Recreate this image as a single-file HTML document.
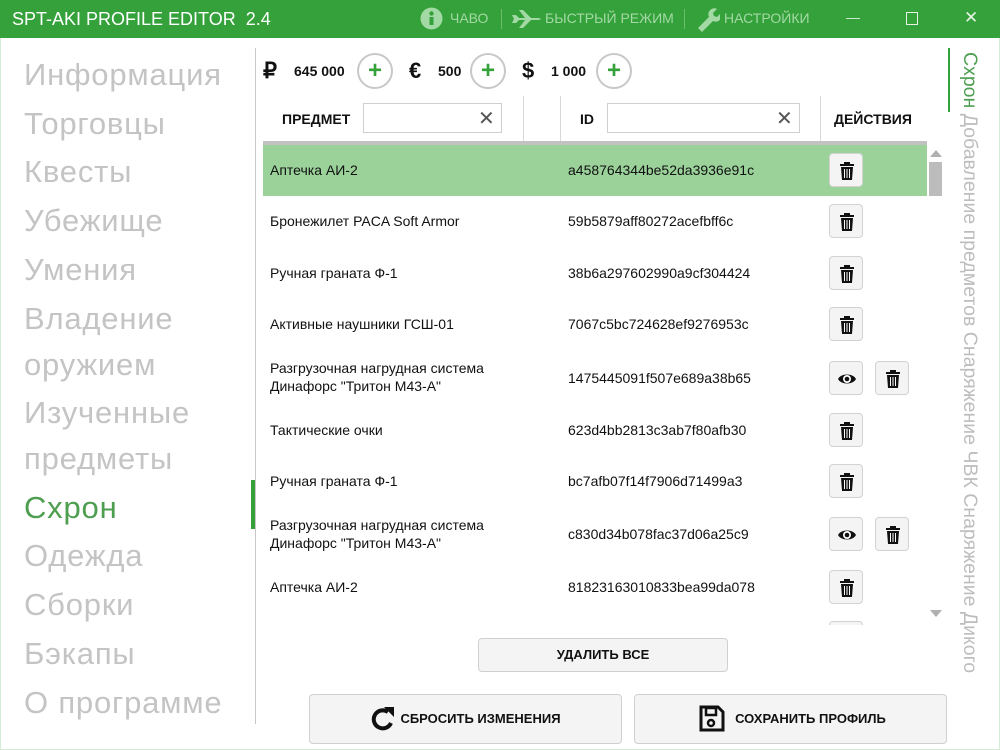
<!DOCTYPE html>
<html><head><meta charset="utf-8"><style>
*{margin:0;padding:0;box-sizing:border-box}
body{width:1000px;height:750px;position:relative;overflow:hidden;background:#fff;font-family:"Liberation Sans","Noto Sans CJK SC",sans-serif;color:#111}
.a{position:absolute}
#tb{left:0;top:0;width:1000px;height:38px;background:#34a13a;color:#fff}
.tbt{font-size:14px;color:#a3d9a4;top:10px}
.nav{left:24px;font-size:31px;letter-spacing:0.8px;color:#c4c4c4;line-height:45px;white-space:nowrap}
.circ{width:36px;height:36px;border:2px solid #c8c8c8;border-radius:50%;color:#35a13a;font-size:24px;font-weight:bold;text-align:center;line-height:31px}
.cur{font-size:14px;font-weight:bold;top:63px}
.nm{left:270px;font-size:14px;line-height:18px}
.id{left:568px;font-size:14px}
.btn{width:34px;height:34px;background:#f4f4f4;border:1px solid #d2d2d2;border-radius:4px}
.btn svg{position:absolute;left:8px;top:8px}
.bb{background:#f4f4f4;border:1px solid #d0d0d0;border-radius:4px;font-size:13px;font-weight:bold;text-align:center}
.hd{font-size:14px;font-weight:bold;top:111px}
.inp{height:30px;border:1px solid #cfcfcf;top:103px;background:#fff}
.vl{width:1px;background:#d8d8d8;top:96px;height:46px}
</style></head><body>
<div class="a" style="left:0;top:38px;width:1000px;height:712px;border:1px solid #d7ecd7;border-top:none"></div>
<div id="tb" class="a">
 <div class="a" style="left:12px;top:9px;font-size:18px;color:#fff">SPT-AKI PROFILE EDITOR&nbsp; 2.4</div>
 <svg class="a" style="left:420px;top:7px" width="23" height="23"><circle cx="11.5" cy="11.5" r="11" fill="#a3d9a4"/><rect x="9.5" y="10" width="4" height="8" fill="#34a13a"/><circle cx="11.5" cy="6.5" r="2.2" fill="#34a13a"/></svg>
 <div class="a tbt" style="left:450px">ЧАВО</div>
 <div class="a" style="left:501px;top:9px;width:1px;height:20px;background:#6cbd6e"></div>
 <svg class="a" style="left:511px;top:9px" width="30" height="20"><path d="M1 6h4l3 3h6L8 1h4l8 8h7c2 0 3 1 3 1s-1 1-3 1h-7l-8 8H8l6-8H8l-3 3H1l2-4z" fill="#a3d9a4"/></svg>
 <div class="a tbt" style="left:545px">БЫСТРЫЙ РЕЖИМ</div>
 <div class="a" style="left:684px;top:9px;width:1px;height:20px;background:#6cbd6e"></div>
 <svg class="a" style="left:694px;top:6px" width="26" height="26"><path d="M4 22l11-11a6 6 0 0 1 8-8l-4 4 1 3 3 1 4-4a6 6 0 0 1-8 8L8 26z" fill="#a3d9a4"/></svg>
 <div class="a tbt" style="left:724px">НАСТРОЙКИ</div>
 <div class="a" style="left:846px;top:18px;width:14px;height:1px;background:#cfe9cf"></div>
 <div class="a" style="left:906px;top:12px;width:12px;height:13px;border:1px solid #e6f4e6"></div>
 <div class="a" style="left:964px;top:8px;font-size:17px;color:#e6f4e6">✕</div>
</div>
<div class="a nav" style="top:52px">Информация</div>
<div class="a nav" style="top:101px">Торговцы</div>
<div class="a nav" style="top:149px">Квесты</div>
<div class="a nav" style="top:198px">Убежище</div>
<div class="a nav" style="top:247px">Умения</div>
<div class="a nav" style="top:296px">Владение</div>
<div class="a nav" style="top:342px">оружием</div>
<div class="a nav" style="top:390px">Изученные</div>
<div class="a nav" style="top:436px">предметы</div>
<div class="a nav" style="top:485px;color:#4e9e50">Схрон</div>
<div class="a nav" style="top:533px">Одежда</div>
<div class="a nav" style="top:582px">Сборки</div>
<div class="a nav" style="top:631px">Бэкапы</div>
<div class="a nav" style="top:680px">О программе</div>
<div class="a" style="left:255px;top:48px;width:1px;height:676px;background:#c8c8c8"></div>
<div class="a" style="left:251px;top:480px;width:4px;height:49px;background:#35a13a"></div>
<div class="a" style="left:263px;top:58px;font-size:22px;font-weight:bold">₽</div>
<div class="a cur" style="left:294px">645 000</div>
<div class="a circ" style="left:357px;top:53px">+</div>
<div class="a" style="left:409px;top:58px;font-size:22px;font-weight:bold">€</div>
<div class="a cur" style="left:438px">500</div>
<div class="a circ" style="left:470px;top:53px">+</div>
<div class="a" style="left:522px;top:58px;font-size:22px;font-weight:bold">$</div>
<div class="a cur" style="left:551px">1 000</div>
<div class="a circ" style="left:596px;top:53px">+</div>
<div class="a hd" style="left:282px">ПРЕДМЕТ</div>
<div class="a inp" style="left:363px;width:139px"></div>
<div class="a" style="left:478px;top:106px;font-size:20px;color:#555">✕</div>
<div class="a vl" style="left:523px"></div>
<div class="a vl" style="left:560px"></div>
<div class="a hd" style="left:580px">ID</div>
<div class="a inp" style="left:607px;width:193px"></div>
<div class="a" style="left:776px;top:106px;font-size:20px;color:#555">✕</div>
<div class="a vl" style="left:820px"></div>
<div class="a hd" style="left:834px">ДЕЙСТВИЯ</div>
<div class="a" style="left:263px;top:141px;width:664px;height:4px;background:#c2c2c2"></div>
<div class="a" style="left:263px;top:145px;width:664px;height:51px;background:#9ad29a"></div>
<div class="a" style="left:930px;top:150px;width:0;height:0;border-left:6px solid transparent;border-right:6px solid transparent;border-bottom:7px solid #b0b0b0"></div>
<div class="a" style="left:929px;top:162px;width:13px;height:34px;background:#bcbcbc"></div>
<div class="a" style="left:930px;top:610px;width:0;height:0;border-left:6px solid transparent;border-right:6px solid transparent;border-top:7px solid #b0b0b0"></div>
<div class="a nm" style="top:161px">Аптечка АИ-2</div><div class="a id" style="top:162px">a458764344be52da3936e91c</div>
<div class="a nm" style="top:212px">Бронежилет PACA Soft Armor</div><div class="a id" style="top:213px">59b5879aff80272acefbff6c</div>
<div class="a nm" style="top:264px">Ручная граната Ф-1</div><div class="a id" style="top:265px">38b6a297602990a9cf304424</div>
<div class="a nm" style="top:315px">Активные наушники ГСШ-01</div><div class="a id" style="top:316px">7067c5bc724628ef9276953c</div>
<div class="a nm" style="top:359px">Разгрузочная нагрудная система<br>Динафорс "Тритон М43-А"</div><div class="a id" style="top:370px">1475445091f507e689a38b65</div>
<div class="a nm" style="top:421px">Тактические очки</div><div class="a id" style="top:422px">623d4bb2813c3ab7f80afb30</div>
<div class="a nm" style="top:472px">Ручная граната Ф-1</div><div class="a id" style="top:473px">bc7afb07f14f7906d71499a3</div>
<div class="a nm" style="top:516px">Разгрузочная нагрудная система<br>Динафорс "Тритон М43-А"</div><div class="a id" style="top:526px">c830d34b078fac37d06a25c9</div>
<div class="a nm" style="top:578px">Аптечка АИ-2</div><div class="a id" style="top:579px">81823163010833bea99da078</div>
<div class="a btn" style="left:829px;top:153px"><svg width="18" height="18"><rect x="2" y="2" width="14" height="2" fill="#111"/><rect x="6" y="0" width="6" height="2" fill="#111"/><path d="M3 5h12l-1 13H4z" fill="#111"/><path d="M6.5 7v9M9 7v9M11.5 7v9" stroke="#fff" stroke-width="1"/></svg></div>
<div class="a btn" style="left:829px;top:204px"><svg width="18" height="18"><rect x="2" y="2" width="14" height="2" fill="#111"/><rect x="6" y="0" width="6" height="2" fill="#111"/><path d="M3 5h12l-1 13H4z" fill="#111"/><path d="M6.5 7v9M9 7v9M11.5 7v9" stroke="#fff" stroke-width="1"/></svg></div>
<div class="a btn" style="left:829px;top:256px"><svg width="18" height="18"><rect x="2" y="2" width="14" height="2" fill="#111"/><rect x="6" y="0" width="6" height="2" fill="#111"/><path d="M3 5h12l-1 13H4z" fill="#111"/><path d="M6.5 7v9M9 7v9M11.5 7v9" stroke="#fff" stroke-width="1"/></svg></div>
<div class="a btn" style="left:829px;top:307px"><svg width="18" height="18"><rect x="2" y="2" width="14" height="2" fill="#111"/><rect x="6" y="0" width="6" height="2" fill="#111"/><path d="M3 5h12l-1 13H4z" fill="#111"/><path d="M6.5 7v9M9 7v9M11.5 7v9" stroke="#fff" stroke-width="1"/></svg></div>
<div class="a btn" style="left:829px;top:361px"><svg width="18" height="18"><path d="M0 9C3 3 15 3 18 9C15 15 3 15 0 9z" fill="#111"/><circle cx="9" cy="9" r="4" fill="#fff"/><circle cx="9" cy="9" r="2.3" fill="#111"/></svg></div>
<div class="a btn" style="left:875px;top:361px"><svg width="18" height="18"><rect x="2" y="2" width="14" height="2" fill="#111"/><rect x="6" y="0" width="6" height="2" fill="#111"/><path d="M3 5h12l-1 13H4z" fill="#111"/><path d="M6.5 7v9M9 7v9M11.5 7v9" stroke="#fff" stroke-width="1"/></svg></div>
<div class="a btn" style="left:829px;top:413px"><svg width="18" height="18"><rect x="2" y="2" width="14" height="2" fill="#111"/><rect x="6" y="0" width="6" height="2" fill="#111"/><path d="M3 5h12l-1 13H4z" fill="#111"/><path d="M6.5 7v9M9 7v9M11.5 7v9" stroke="#fff" stroke-width="1"/></svg></div>
<div class="a btn" style="left:829px;top:464px"><svg width="18" height="18"><rect x="2" y="2" width="14" height="2" fill="#111"/><rect x="6" y="0" width="6" height="2" fill="#111"/><path d="M3 5h12l-1 13H4z" fill="#111"/><path d="M6.5 7v9M9 7v9M11.5 7v9" stroke="#fff" stroke-width="1"/></svg></div>
<div class="a btn" style="left:829px;top:517px"><svg width="18" height="18"><path d="M0 9C3 3 15 3 18 9C15 15 3 15 0 9z" fill="#111"/><circle cx="9" cy="9" r="4" fill="#fff"/><circle cx="9" cy="9" r="2.3" fill="#111"/></svg></div>
<div class="a btn" style="left:875px;top:517px"><svg width="18" height="18"><rect x="2" y="2" width="14" height="2" fill="#111"/><rect x="6" y="0" width="6" height="2" fill="#111"/><path d="M3 5h12l-1 13H4z" fill="#111"/><path d="M6.5 7v9M9 7v9M11.5 7v9" stroke="#fff" stroke-width="1"/></svg></div>
<div class="a btn" style="left:829px;top:570px"><svg width="18" height="18"><rect x="2" y="2" width="14" height="2" fill="#111"/><rect x="6" y="0" width="6" height="2" fill="#111"/><path d="M3 5h12l-1 13H4z" fill="#111"/><path d="M6.5 7v9M9 7v9M11.5 7v9" stroke="#fff" stroke-width="1"/></svg></div>
<div class="a" style="left:829px;top:621px;width:34px;height:4px;border:1px solid #d2d2d2;border-bottom:none;border-radius:4px 4px 0 0;background:#f4f4f4"></div>
<div class="a bb" style="left:478px;top:638px;width:250px;height:34px;line-height:32px">УДАЛИТЬ ВСЕ</div>
<div class="a bb" style="left:309px;top:694px;width:313px;height:50px;line-height:48px;padding-left:30px">СБРОСИТЬ ИЗМЕНЕНИЯ</div>
<svg class="a" style="left:371px;top:706px" width="26" height="26"><path d="M20 17A9 9 0 1 1 17 6" fill="none" stroke="#111" stroke-width="4"/><path d="M13 1h10v10z" fill="#111"/></svg>
<div class="a bb" style="left:634px;top:694px;width:313px;height:50px;line-height:48px;padding-left:40px">СОХРАНИТЬ ПРОФИЛЬ</div>
<svg class="a" style="left:699px;top:705px" width="26" height="27"><path d="M2 2h17l5 5v18H2z" fill="none" stroke="#111" stroke-width="3"/><rect x="7" y="3" width="10" height="7" fill="none" stroke="#111" stroke-width="2.5"/><circle cx="12" cy="18" r="3" fill="none" stroke="#111" stroke-width="2.5"/></svg>
<div class="a" style="left:948px;top:48px;width:2px;height:64px;background:#35a13a"></div>
<div class="a" style="left:957px;top:52px;width:24px;height:640px">
 <div style="position:absolute;left:25px;top:0;transform-origin:0 0;transform:rotate(90deg);white-space:nowrap;font-size:19.5px;color:#bdbdbd;line-height:25px"><span style="color:#4e9e50">Схрон</span> Добавление предметов Снаряжение ЧВК Снаряжение Дикого</div>
</div>
</body></html>
